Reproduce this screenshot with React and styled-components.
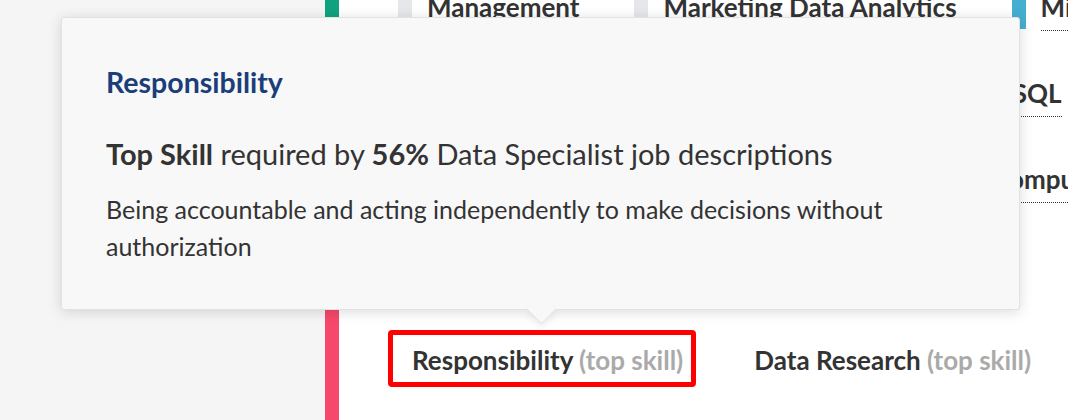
import React from "react";
import styled, { createGlobalStyle } from "styled-components";

const GlobalStyle = createGlobalStyle`
  html, body { margin: 0; padding: 0; background: #ffffff; }
  body { font-family: "Lato", "Noto Sans", "Liberation Sans", sans-serif; color: #333333; }
  #root { width: 1068px; height: 420px; }
`;

const Page = styled.div`
  position: relative;
  display: flex;
  width: 1068px;
  height: 420px;
  overflow: hidden;
  background: #ffffff;
`;

const Sidebar = styled.aside`
  flex: 0 0 325px;
  background: #f5f5f5;
`;

const ColorBar = styled.div`
  flex: 0 0 14px;
  display: flex;
  flex-direction: column;
`;

const BarSegment = styled.div`
  flex: ${(p) => p.$grow};
  background: ${(p) => p.$color};
`;

const Content = styled.main`
  flex: 1;
  display: flex;
  flex-direction: column;
  padding-left: 49px;
  min-width: 0;
`;

const Legend = styled.div`
  display: flex;
  flex-direction: column;
  gap: 46px;
  margin-top: -9px;
  margin-left: 10px;
`;

const LegendRow = styled.div`
  display: flex;
  gap: 55px;
  align-items: flex-start;
  white-space: nowrap;
`;

const LegendItem = styled.div`
  display: flex;
  gap: 15px;
  align-items: flex-start;
  flex: none;
`;

const Swatch = styled.span`
  width: 14px;
  height: 38px;
  background: ${(p) => p.$color};
  flex: none;
`;

const Label = styled.span`
  font-size: 26px;
  font-weight: 700;
  line-height: 32px;
  padding-bottom: 7px;
  border-bottom: 1px dotted #333333;
  color: #333333;
`;

const TopSkills = styled.div`
  display: flex;
  gap: 34px;
  margin-top: 41px;
  white-space: nowrap;
`;

const SkillChip = styled.div`
  border: 5px solid ${(p) => (p.$highlight ? "#ff0000" : "transparent")};
  border-radius: 4px;
  padding: 9px 8px 6px 19px;
  font-size: 26px;
  font-weight: 700;
  line-height: 32px;
  color: #333333;
`;

const Muted = styled.span`
  color: #aaaaaa;
`;

const Tooltip = styled.div`
  position: absolute;
  left: 61px;
  top: 17px;
  width: 959px;
  height: 293px;
  box-sizing: border-box;
  padding: 47px 44px 0 44px;
  background: #f8f8f8;
  border: 1px solid #e2e2e2;
  border-radius: 3px;
  box-shadow: 0 2px 14px rgba(0, 0, 0, 0.14);

  &::after {
    content: "";
    position: absolute;
    left: 50%;
    bottom: -11px;
    width: 20px;
    height: 20px;
    margin-left: -10px;
    background: #f8f8f8;
    border-right: 1px solid #e2e2e2;
    border-bottom: 1px solid #e2e2e2;
    transform: rotate(45deg);
    box-shadow: 3px 3px 6px rgba(0, 0, 0, 0.06);
  }
`;

const TipTitle = styled.h3`
  margin: 0;
  font-size: 28.5px;
  line-height: 34px;
  font-weight: 700;
  color: #1b3e7a;
`;

const TipStat = styled.p`
  margin: 37px 0 0;
  font-size: 29px;
  line-height: 36px;
  font-weight: 400;
  color: #333333;

  strong { font-weight: 700; }
`;

const TipDesc = styled.p`
  margin: 19px 0 0;
  font-size: 25px;
  line-height: 37px;
  color: #333333;
`;

const rows = [
  [
    { label: "Management", color: "#e5e7ea" },
    { label: "Marketing Data Analytics", color: "#e5e7ea" },
    { label: "Microsoft Excel", color: "#46aed0" },
  ],
  [
    { label: "Data Modelling", color: "#e5e7ea" },
    { label: "Business Intelligence", color: "#e5e7ea" },
    { label: "SQL", color: "#46aed0" },
  ],
  [
    { label: "Critical Thinking", color: "#e5e7ea" },
    { label: "Data Visualization", color: "#e5e7ea" },
    { label: "Computer Science", color: "#46aed0" },
  ],
  [
    { label: "Python", color: "#e5e7ea" },
    { label: "Data Collection", color: "#e5e7ea" },
    { label: "Reporting", color: "#46aed0" },
  ],
];

export default function App() {
  return (
    <>
      <GlobalStyle />
      <Page>
        <Sidebar />
        <ColorBar>
          <BarSegment $grow={1} $color="#10a27f" />
          <BarSegment $grow={1.6} $color="#f6486a" />
        </ColorBar>
        <Content>
          <Legend>
            {rows.map((row, i) => (
              <LegendRow key={i}>
                {row.map((item) => (
                  <LegendItem key={item.label}>
                    <Swatch $color={item.color} />
                    <Label>{item.label}</Label>
                  </LegendItem>
                ))}
              </LegendRow>
            ))}
          </Legend>
          <TopSkills>
            <SkillChip $highlight>
              Responsibility <Muted>(top skill)</Muted>
            </SkillChip>
            <SkillChip>
              Data Research <Muted>(top skill)</Muted>
            </SkillChip>
          </TopSkills>
        </Content>
        <Tooltip>
          <TipTitle>Responsibility</TipTitle>
          <TipStat>
            <strong>Top Skill</strong> required by <strong>56%</strong> Data Specialist job descriptions
          </TipStat>
          <TipDesc>
            Being accountable and acting independently to make decisions without authorization
          </TipDesc>
        </Tooltip>
      </Page>
    </>
  );
}
